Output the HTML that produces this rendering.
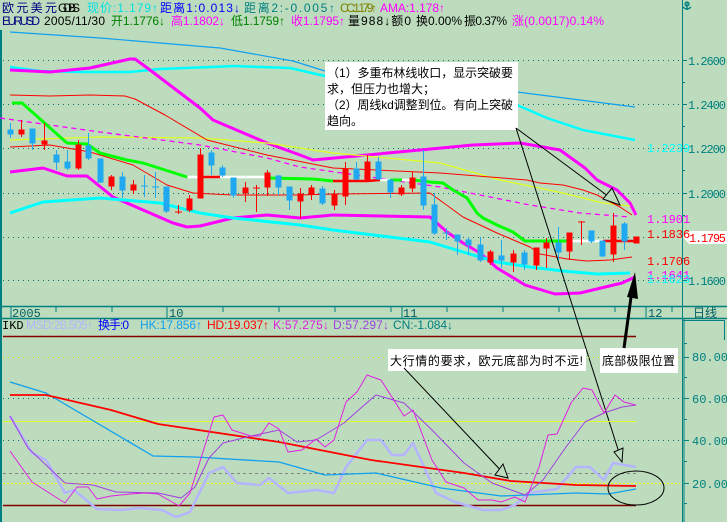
<!DOCTYPE html>
<html><head><meta charset="utf-8"><style>
html,body{margin:0;padding:0;background:#bddcbd;}
svg{display:block;}
text{font-family:"Liberation Sans","Noto Sans CJK SC",sans-serif;font-size:12px;}
.m{font-family:"Liberation Mono","Noto Sans CJK SC",monospace;}
</style></head><body>
<svg width="727" height="522" viewBox="0 0 727 522" xmlns="http://www.w3.org/2000/svg">
<rect width="727" height="522" fill="#bddcbd"/>
<g stroke="#008080" stroke-width="1" fill="none">
<line x1="1" y1="30" x2="1" y2="522" stroke-width="2"/>
<line x1="682.5" y1="0" x2="682.5" y2="522"/>
<line x1="0" y1="306.5" x2="727" y2="306.5" stroke-width="1.5"/>
<line x1="0" y1="318.5" x2="727" y2="318.5" stroke-width="1.5"/>
<line x1="684" y1="319" x2="684" y2="522"/>
<line x1="683" y1="320.5" x2="724" y2="320.5"/>
<line x1="724.5" y1="320" x2="724.5" y2="340"/>
</g>
<g stroke="#008080">
<line x1="11" y1="307" x2="11" y2="318"/><line x1="56" y1="307" x2="56" y2="312"/><line x1="112" y1="307" x2="112" y2="312"/>
<line x1="167" y1="307" x2="167" y2="318"/><line x1="223" y1="307" x2="223" y2="312"/><line x1="279" y1="307" x2="279" y2="312"/>
<line x1="335" y1="307" x2="335" y2="312"/><line x1="391" y1="307" x2="391" y2="312"/><line x1="402" y1="307" x2="402" y2="318"/>
<line x1="447" y1="307" x2="447" y2="312"/><line x1="503" y1="307" x2="503" y2="312"/><line x1="559" y1="307" x2="559" y2="312"/>
<line x1="615" y1="307" x2="615" y2="312"/><line x1="646" y1="307" x2="646" y2="318"/><line x1="672" y1="307" x2="672" y2="312"/>
</g>
<g fill="#006060">
<text x="12" y="317" class="m" font-size="11">2005</text>
<text x="169" y="317" class="m" font-size="11">10</text>
<text x="403" y="317" class="m" font-size="11">11</text>
<text x="648" y="317" class="m" font-size="11">12</text>
</g>
<text x="693" y="317" fill="#006060" font-size="12">日线</text>

<text y="12" font-size="12"><tspan x="2" fill="#000080" textLength="55">欧元美元</tspan><tspan x="58" fill="#000" textLength="22">GDBS</tspan><tspan x="87" fill="#00e0e0" textLength="71">现价:1.179↑</tspan><tspan x="160" fill="#0000ff" textLength="80">距离1:0.013↓</tspan><tspan x="244" fill="#008080" textLength="91">距离2:-0.005↑</tspan><tspan x="340" fill="#808000" textLength="37">CC:1.179↑</tspan><tspan x="380" fill="#ff00ff" textLength="65">AMA:1.178↑</tspan></text>
<text y="25" font-size="12"><tspan x="2" fill="#000080" textLength="38">EURUSD</tspan><tspan x="44" fill="#000" textLength="61">2005/11/30</tspan><tspan x="111" fill="#008000" textLength="54">开1.1776↓</tspan><tspan x="171" fill="#ff00ff" textLength="54">高1.1802↓</tspan><tspan x="231" fill="#008000" textLength="54">低1.1759↑</tspan><tspan x="291" fill="#ff00ff" textLength="54">收1.1795↑</tspan><tspan x="348" fill="#000" textLength="63">量988↓额0</tspan><tspan x="416" fill="#000" textLength="46">换0.00%</tspan><tspan x="464" fill="#000" textLength="43">振0.37%</tspan><tspan x="512" fill="#ff00ff" textLength="92">涨(0.0017)0.14%</tspan></text>
<g stroke="#008080" fill="none" stroke-width="1.3"><circle cx="687" cy="4" r="2"/><line x1="687" y1="2" x2="687" y2="10"/><path d="M683 7 Q687 11 691 7"/></g>

<g stroke="#007070" stroke-dasharray="1,4" stroke-width="1">
<line x1="3" y1="60.5" x2="680" y2="60.5"/><line x1="3" y1="104.5" x2="680" y2="104.5"/><line x1="3" y1="148.5" x2="680" y2="148.5"/>
<line x1="3" y1="193.5" x2="680" y2="193.5"/><line x1="3" y1="237.5" x2="680" y2="237.5"/><line x1="3" y1="280.5" x2="680" y2="280.5"/>
</g>
<g stroke="#008080"><line x1="682" y1="60.5" x2="687" y2="60.5"/><line x1="682" y1="104.5" x2="687" y2="104.5"/><line x1="682" y1="148.5" x2="687" y2="148.5"/><line x1="682" y1="193.5" x2="687" y2="193.5"/><line x1="682" y1="280.5" x2="687" y2="280.5"/>
<line x1="682" y1="82.5" x2="685" y2="82.5"/><line x1="682" y1="126.5" x2="685" y2="126.5"/><line x1="682" y1="170.5" x2="685" y2="170.5"/><line x1="682" y1="215.5" x2="685" y2="215.5"/><line x1="682" y1="258.5" x2="685" y2="258.5"/></g>
<g fill="#008080" font-size="12">
<text x="688" y="65" class="m" textLength="38">1.2600</text><text x="688" y="109" class="m" textLength="38">1.2400</text><text x="688" y="153" class="m" textLength="38">1.2200</text><text x="688" y="198" class="m" textLength="38">1.2000</text><text x="688" y="285" class="m" textLength="38">1.1600</text>
</g>
<path d="M683 237 L689 231 H727 V244 H689 Z" fill="#fff"/>
<text x="689" y="242" fill="#ff0000" class="m" font-size="12" textLength="37">1.1795</text>

<g fill="none" stroke-linejoin="round">
<polyline stroke="#10a0f0" stroke-width="1.2" points="10,32 100,38 220,48 293,61 325,71 420,82 517,92 580,100 635,107"/>
<polyline stroke="#00ffff" stroke-width="2.5" points="10,67 40,71 80,72 130,72 160,69 235,66 290,68 325,76 420,90 517,105 547,118 583,130 635,140"/>
<polyline stroke="#ff00ff" stroke-width="3" points="10,70 50,72 60,71 90,68 130,59 135,59 150,70 200,108 213,120 267,143 300,155 313,160 367,155 420,150 473,145 520,143 560,150 585,168 597,180 617,190 630,203 636,215"/>
<polyline stroke="#e0ff20" stroke-width="1.2" points="10,140 100,137 200,138 267,143 333,153 440,163 500,180 563,193 603,203 630,206"/>
<polyline stroke="#ff00ff" stroke-width="1.3" stroke-dasharray="5,4" points="0,118 100,132 200,145 267,158 300,167 440,187 480,195 530,205 580,213 630,217"/>
<polyline stroke="#ff0000" stroke-width="1" points="10,95 50,96 90,95 125,96 135,99 165,115 207,140 267,155 333,168 440,173 527,180 540,183 563,185 583,190 597,195 620,207 632,215"/>
<polyline stroke="#ff0000" stroke-width="1" points="10,147 50,145 90,152 133,165 167,185 193,193 233,195 300,195 333,194 430,193 463,217 497,233 530,247 540,254 567,259 587,261 610,260 632,257"/>
<polyline stroke="#00ff00" stroke-width="3" points="12,103 22,103 67,143 87,144 100,153 127,160 143,163 187,177"/>
<polyline stroke="#ffffff" stroke-width="2.5" points="188,177 223,177"/>
<polyline stroke="#ff0000" stroke-width="2.5" points="200,177 220,177"/>
<polyline stroke="#ffffff" stroke-width="2.5" points="223,177 267,177"/>
<polyline stroke="#00ff00" stroke-width="3" points="268,178 313,179 333,181"/>
<polyline stroke="#ff0000" stroke-width="2.5" points="333,181 367,181 380,180"/>
<polyline stroke="#ffffff" stroke-width="2.5" points="380,180 390,180"/>
<polyline stroke="#00ff00" stroke-width="3" points="390,180 402,180"/>
<polyline stroke="#ffffff" stroke-width="2.5" points="402,180 413,180"/>
<polyline stroke="#00ff00" stroke-width="3" points="413,180 430,182 443,183 453,190 467,198 477,213 483,218 497,225 513,232 525,241 567,241"/>
<polyline stroke="#ffffff" stroke-width="2.5" points="567,241 603,241"/>
<polyline stroke="#ff0000" stroke-width="2.5" points="603,241 636,241"/>
<polyline stroke="#ff00ff" stroke-width="3" points="10,172 43,168 67,176 87,176 113,197 143,210 173,223 187,227 200,226 233,218 267,215 300,218 333,215 430,217 447,232 463,243 480,253 497,268 517,280 525,285 555,294 580,293 622,283 635,277"/>
<polyline stroke="#00ffff" stroke-width="3" points="10,213 43,202 100,198 160,203 200,213 233,218 300,225 333,230 430,242 463,252 497,262 530,267 563,271 597,274 630,273"/>
</g>

<g stroke="#20a8f0" fill="#20a8f0">
<line x1="10.5" y1="123" x2="10.5" y2="138"/><rect x="8" y="130" width="5" height="4"/>
<line x1="32.5" y1="129" x2="32.5" y2="150"/><rect x="30" y="129" width="5" height="14"/>
<line x1="56.5" y1="150" x2="56.5" y2="170"/><rect x="54" y="155" width="5" height="7"/>
<line x1="67.5" y1="150" x2="67.5" y2="170"/><rect x="65" y="162" width="5" height="6"/>
<line x1="88.5" y1="133" x2="88.5" y2="160"/><rect x="86" y="146" width="5" height="12"/>
<line x1="100.5" y1="159" x2="100.5" y2="183"/><rect x="98" y="159" width="5" height="23"/>
<line x1="122.5" y1="172" x2="122.5" y2="198"/><rect x="120" y="177" width="5" height="13"/>
<line x1="144.5" y1="175" x2="144.5" y2="197"/><line x1="141" y1="186" x2="148" y2="186"/>
<line x1="155.5" y1="172" x2="155.5" y2="198"/><line x1="152" y1="187" x2="159" y2="187"/>
<line x1="166.5" y1="187" x2="166.5" y2="213"/><rect x="164" y="187" width="5" height="24"/>
<line x1="211.5" y1="150" x2="211.5" y2="175"/><rect x="209" y="153" width="5" height="12"/>
<line x1="222.5" y1="165" x2="222.5" y2="177"/><rect x="220" y="168" width="5" height="7"/>
<line x1="233.5" y1="178" x2="233.5" y2="198"/><rect x="231" y="178" width="5" height="17"/>
<line x1="278.5" y1="175" x2="278.5" y2="195"/><rect x="276" y="176" width="5" height="11"/>
<line x1="289.5" y1="187" x2="289.5" y2="210"/><rect x="287" y="187" width="5" height="13"/>
<line x1="322.5" y1="186" x2="322.5" y2="205"/><rect x="320" y="189" width="5" height="14"/>
<line x1="356.5" y1="162" x2="356.5" y2="180"/><rect x="354" y="169" width="5" height="10"/>
<line x1="378.5" y1="157" x2="378.5" y2="180"/><rect x="376" y="162" width="5" height="17"/>
<line x1="390.5" y1="180" x2="390.5" y2="198"/><rect x="388" y="180" width="5" height="12"/>
<line x1="423.5" y1="150" x2="423.5" y2="210"/><rect x="421" y="177" width="5" height="28"/>
<line x1="434.5" y1="193" x2="434.5" y2="235"/><rect x="432" y="205" width="5" height="28"/>
<line x1="446.5" y1="228" x2="446.5" y2="240"/><line x1="443" y1="233" x2="450" y2="233"/>
<line x1="457.5" y1="235" x2="457.5" y2="255"/><rect x="455" y="235" width="5" height="6"/>
<line x1="468.5" y1="237" x2="468.5" y2="255"/><rect x="466" y="240" width="5" height="5"/>
<line x1="480.5" y1="237" x2="480.5" y2="262"/><rect x="478" y="245" width="5" height="15"/>
<line x1="501.5" y1="240" x2="501.5" y2="268"/><rect x="499" y="256" width="5" height="4"/>
<line x1="524.5" y1="250" x2="524.5" y2="270"/><rect x="522" y="253" width="5" height="11"/>
<line x1="558.5" y1="227" x2="558.5" y2="260"/><rect x="556" y="243" width="5" height="9"/>
<line x1="591.5" y1="231" x2="591.5" y2="243"/><rect x="589" y="231" width="5" height="10"/>
<line x1="602.5" y1="241" x2="602.5" y2="257"/><rect x="600" y="241" width="5" height="15"/>
<line x1="624.5" y1="222" x2="624.5" y2="250"/><rect x="622" y="224" width="5" height="17"/>
</g>
<g stroke="#ff0000" fill="#ff0000">
<line x1="21.5" y1="120" x2="21.5" y2="137"/><rect x="19" y="130" width="5" height="4"/>
<line x1="44.5" y1="123" x2="44.5" y2="150"/><rect x="42" y="141" width="5" height="3"/>
<line x1="78.5" y1="140" x2="78.5" y2="170"/><rect x="76" y="145" width="5" height="23"/>
<line x1="111.5" y1="175" x2="111.5" y2="190"/><rect x="109" y="177" width="5" height="9"/>
<line x1="133.5" y1="180" x2="133.5" y2="194"/><rect x="131" y="185" width="5" height="5"/>
<line x1="178.5" y1="205" x2="178.5" y2="214"/><line x1="175" y1="212" x2="182" y2="212"/>
<line x1="189.5" y1="195" x2="189.5" y2="212"/><rect x="187" y="199" width="5" height="11"/>
<line x1="200.5" y1="148" x2="200.5" y2="198"/><rect x="198" y="155" width="5" height="43"/>
<line x1="245.5" y1="182" x2="245.5" y2="202"/><rect x="243" y="188" width="5" height="5"/>
<line x1="256.5" y1="185" x2="256.5" y2="212"/><line x1="253" y1="188" x2="260" y2="188"/>
<line x1="267.5" y1="170" x2="267.5" y2="196"/><rect x="265" y="173" width="5" height="14"/>
<line x1="300.5" y1="188" x2="300.5" y2="218"/><rect x="298" y="194" width="5" height="7"/>
<line x1="311.5" y1="185" x2="311.5" y2="200"/><rect x="309" y="188" width="5" height="6"/>
<line x1="334.5" y1="190" x2="334.5" y2="210"/><rect x="332" y="195" width="5" height="10"/>
<line x1="345.5" y1="162" x2="345.5" y2="205"/><rect x="343" y="169" width="5" height="27"/>
<line x1="367.5" y1="155" x2="367.5" y2="182"/><rect x="365" y="162" width="5" height="18"/>
<line x1="401.5" y1="185" x2="401.5" y2="196"/><rect x="399" y="188" width="5" height="6"/>
<line x1="412.5" y1="172" x2="412.5" y2="192"/><rect x="410" y="178" width="5" height="10"/>
<line x1="490.5" y1="250" x2="490.5" y2="265"/><rect x="488" y="252" width="5" height="10"/>
<line x1="513.5" y1="250" x2="513.5" y2="272"/><rect x="511" y="254" width="5" height="8"/>
<line x1="536.5" y1="248" x2="536.5" y2="270"/><rect x="534" y="248" width="5" height="17"/>
<line x1="546.5" y1="238" x2="546.5" y2="268"/><rect x="544" y="243" width="5" height="5"/>
<line x1="569.5" y1="233" x2="569.5" y2="260"/><rect x="567" y="233" width="5" height="18"/>
<line x1="581.5" y1="221" x2="581.5" y2="245"/><line x1="578" y1="222" x2="585" y2="222"/>
<line x1="613.5" y1="213" x2="613.5" y2="262"/><rect x="611" y="226" width="5" height="28"/>
<rect x="634" y="237" width="5" height="6"/>
</g>

<g font-size="12">
<text x="647" y="152" fill="#00ffff" class="m">1.2239</text>
<text x="647" y="223" fill="#ff00ff" class="m">1.1901</text>
<text x="647" y="238" fill="#ff0000" class="m">1.1836</text>
<text x="647" y="265" fill="#ff0000" class="m">1.1706</text>
<text x="647" y="279" fill="#ff00ff" class="m">1.1641</text>
<text x="647" y="283" fill="#00ffff" class="m">1.1623</text>
</g>

<rect x="325" y="62" width="193" height="68" fill="#ffffff"/>
<g fill="#000" font-size="13">
<text x="327" y="77" textLength="186">（1）多重布林线收口，显示突破要</text>
<text x="327" y="93">求，但压力也增大；</text>
<text x="327" y="109" textLength="186">（2）周线kd调整到位。有向上突破</text>
<text x="327" y="125">趋向。</text>
</g>
<g stroke="#000" fill="none" stroke-width="1">
<line x1="516" y1="128" x2="620" y2="205"/>
<path d="M603 199 L620 205 L612 188 Z" fill="#bddcbd"/>
<line x1="516" y1="128" x2="622" y2="462"/>
<path d="M614 452 L622 462 L623 448 Z" fill="#bddcbd"/>
</g>

<text y="329" font-size="11"><tspan x="2" fill="#000" class="m">IKD</tspan><tspan x="26" fill="#b4b4ff" textLength="67">MSD:28.505↑</tspan><tspan x="98" fill="#0000ff" textLength="31">换手:0</tspan><tspan x="140" fill="#10a0f0" textLength="62">HK:17.856↑</tspan><tspan x="207" fill="#ff0000" textLength="62">HD:19.037↑</tspan><tspan x="273" fill="#e020e0" textLength="56">K:57.275↓</tspan><tspan x="333" fill="#a040e0" textLength="56">D:57.297↓</tspan><tspan x="393" fill="#008080" textLength="60">CN:-1.084↓</tspan></text>

<g stroke-width="1" fill="none">
<line x1="3" y1="336.5" x2="636" y2="336.5" stroke="#800000" stroke-width="1.5"/>
<line x1="3" y1="505.5" x2="636" y2="505.5" stroke="#800000" stroke-width="1.5"/>
<line x1="3" y1="357.5" x2="680" y2="357.5" stroke="#e0e000" stroke-dasharray="1,4"/>
<line x1="3" y1="398.5" x2="680" y2="398.5" stroke="#007070" stroke-dasharray="1,4"/>
<line x1="3" y1="421.5" x2="636" y2="421.5" stroke="#e0ff20"/>
<line x1="3" y1="440.5" x2="680" y2="440.5" stroke="#007070" stroke-dasharray="1,4"/>
<line x1="3" y1="473.5" x2="636" y2="473.5" stroke="#808080" stroke-dasharray="3,3"/>
<line x1="3" y1="483.5" x2="680" y2="483.5" stroke="#ffff00" stroke-dasharray="2,2"/>
</g>
<g stroke="#008080"><line x1="684" y1="357.5" x2="689" y2="357.5"/><line x1="684" y1="398.5" x2="689" y2="398.5"/><line x1="684" y1="440.5" x2="689" y2="440.5"/><line x1="684" y1="483.5" x2="689" y2="483.5"/><line x1="684" y1="377.5" x2="687" y2="377.5"/><line x1="684" y1="419.5" x2="687" y2="419.5"/><line x1="684" y1="461.5" x2="687" y2="461.5"/><line x1="684" y1="503.5" x2="687" y2="503.5"/><line x1="684" y1="343.5" x2="687" y2="343.5"/></g>
<g fill="#008080" font-size="12">
<text x="692" y="361" class="m">80.00</text><text x="692" y="403" class="m">60.00</text><text x="692" y="445" class="m">40.00</text><text x="692" y="488" class="m">20.00</text>
</g>

<g fill="none" stroke-linejoin="round">
<polyline stroke="#b4b4ff" stroke-width="2.5" points="10,416 32,453 46,460 65,493 74,490 97,509 121,510 139,508 162,510 176,517 190,512 209,473 223,467 237,483 260,485 269,478 288,493 316,490 334,493 346,467 367,440 381,440 392,455 404,455 413,443 436,493 455,502 483,510 501,510 515,505 529,493 557,489 576,467 590,467 604,480 613,463 636,467"/>
<polyline stroke="#10a0f0" stroke-width="1.3" points="10,382 46,393 153,456 195,457 279,462 325,475 376,473 441,488 501,496 576,493 608,494 636,489"/>
<polyline stroke="#ff0000" stroke-width="1.8" points="10,395 46,395 111,410 158,424 279,442 371,460 464,473 511,481 576,485 636,486"/>
<polyline stroke="#a040e0" stroke-width="1" points="10,416 28,448 46,465 65,483 93,485 116,492 158,493 181,498 195,487 209,458 223,443 251,436 279,430 297,442 316,440 344,423 362,407 376,395 404,403 432,430 464,463 492,483 525,495 543,480 566,447 585,422 604,413 622,407 636,405"/>
<polyline stroke="#e020e0" stroke-width="1" points="10,451 32,482 65,503 77,487 88,487 97,499 111,496 130,494 144,493 158,494 179,506 190,493 214,417 223,415 232,430 251,436 260,436 269,423 279,429 288,452 302,450 316,439 325,447 334,440 346,402 357,392 367,375 381,380 404,416 413,410 432,460 446,482 464,488 478,500 492,500 501,502 515,497 525,502 539,467 548,435 557,434 571,403 583,388 592,390 604,413 615,395 624,402 636,405"/>
</g>

<rect x="388" y="349" width="198" height="22" fill="#fff"/>
<text x="390" y="365" fill="#000" font-size="13" textLength="193">大行情的要求，欧元底部为时不远!</text>
<g stroke="#000" fill="none">
<line x1="404" y1="368" x2="508" y2="478"/>
<path d="M495 475 L508 478 L503 464 Z" fill="#bddcbd"/>
<ellipse cx="636" cy="488" rx="28" ry="17"/>
</g>
<rect x="600" y="348" width="78" height="25" fill="#fff"/>
<text x="602" y="365" fill="#000" font-size="13" textLength="73">底部极限位置</text>
<line x1="624" y1="348" x2="632" y2="290" stroke="#000" stroke-width="3"/>
<path d="M627 297 L635 272 L638 299 Z" fill="#000"/>
</svg>
</body></html>
